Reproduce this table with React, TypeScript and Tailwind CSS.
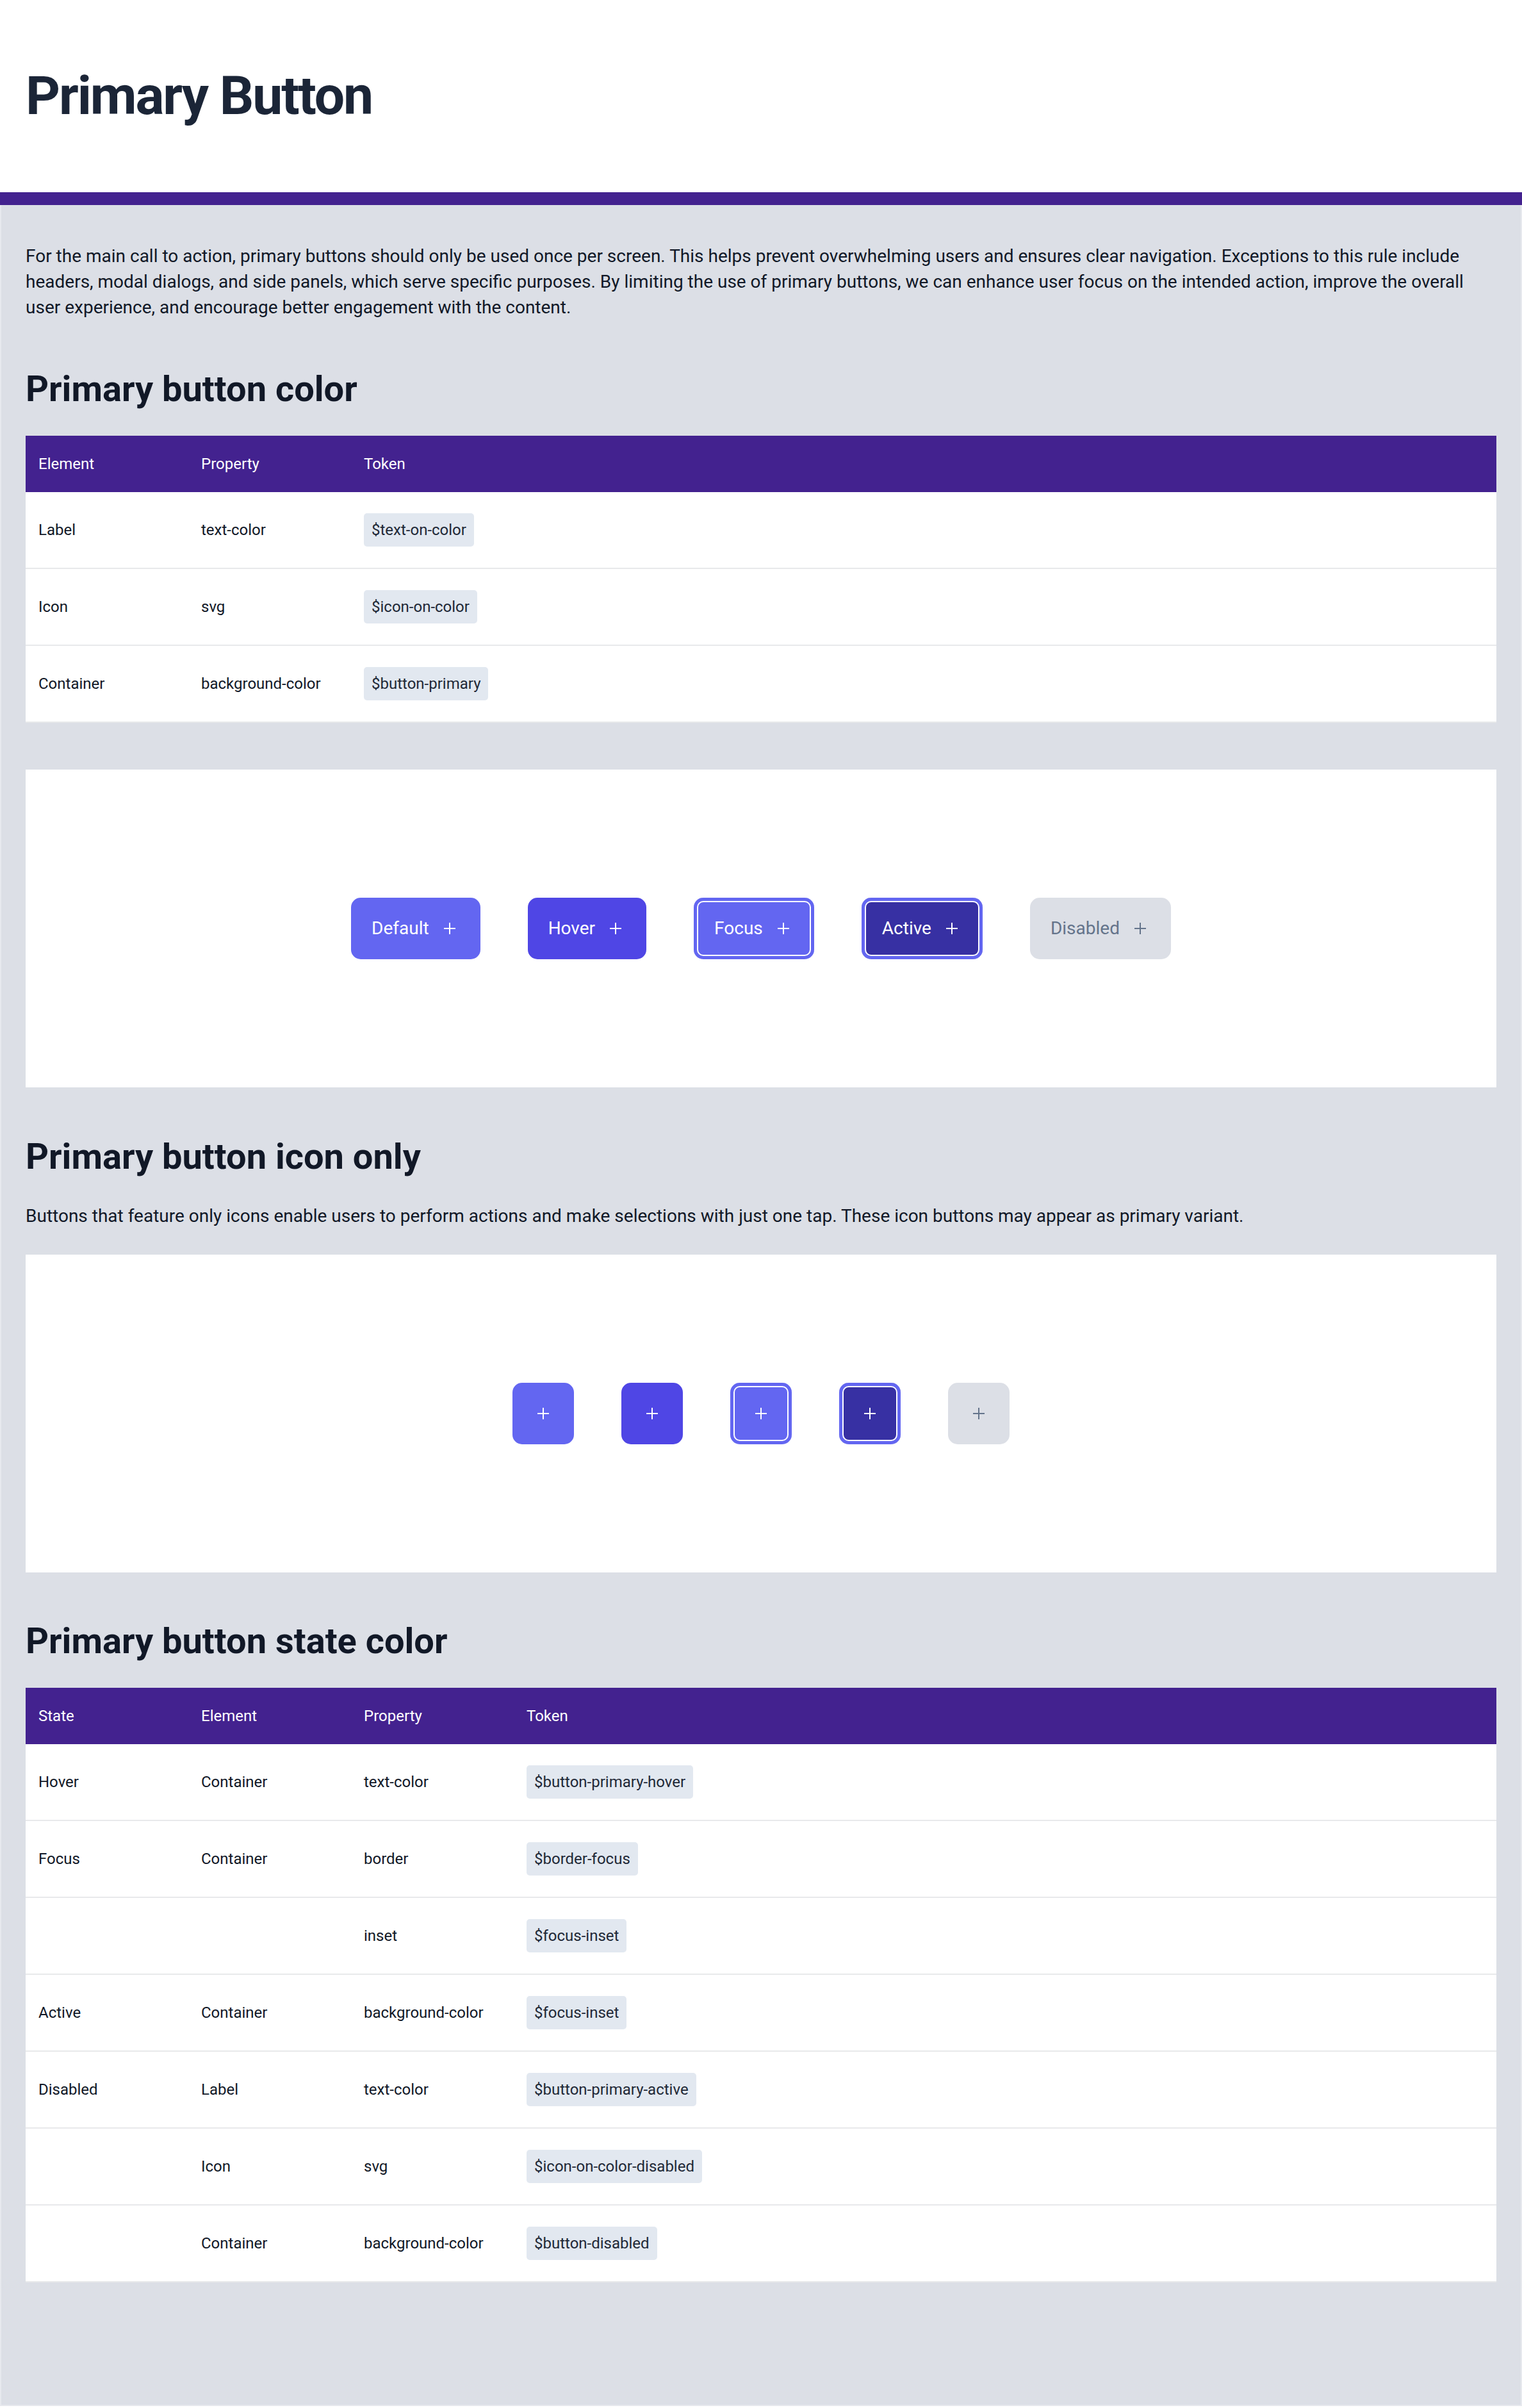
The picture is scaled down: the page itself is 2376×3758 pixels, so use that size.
import React from "react";

const PlusIcon = ({ className = "" }: { className?: string }) => (
  <svg viewBox="0 0 18 18" className={className} fill="none">
    <path d="M9 0v18M0 9h18" stroke="currentColor" strokeWidth="2" />
  </svg>
);

type Variant = "default" | "hover" | "focus" | "active" | "disabled";

const variantClass: Record<Variant, string> = {
  default: "bg-[#6366f1] text-white",
  hover: "bg-[#4f46e5] text-white",
  focus: "bg-[#6366f1] text-white shadow-[inset_0_0_0_5px_#6366f1,inset_0_0_0_7px_#ffffff]",
  active: "bg-[#3730a3] text-white shadow-[inset_0_0_0_5px_#6366f1,inset_0_0_0_7px_#ffffff]",
  disabled: "bg-[#dcdfe6] text-[#64748b]",
};

const buttons: { label: string; variant: Variant }[] = [
  { label: "Default", variant: "default" },
  { label: "Hover", variant: "hover" },
  { label: "Focus", variant: "focus" },
  { label: "Active", variant: "active" },
  { label: "Disabled", variant: "disabled" },
];

const colorRows = [
  ["Label", "text-color", "$text-on-color"],
  ["Icon", "svg", "$icon-on-color"],
  ["Container", "background-color", "$button-primary"],
];

const stateRows = [
  ["Hover", "Container", "text-color", "$button-primary-hover"],
  ["Focus", "Container", "border", "$border-focus"],
  ["", "", "inset", "$focus-inset"],
  ["Active", "Container", "background-color", "$focus-inset"],
  ["Disabled", "Label", "text-color", "$button-primary-active"],
  ["", "Icon", "svg", "$icon-on-color-disabled"],
  ["", "Container", "background-color", "$button-disabled"],
];

const Token = ({ children }: { children: React.ReactNode }) => (
  <span className="inline-flex h-[52px] items-center rounded-[5px] bg-[#e2e8f0] px-3 text-[#1f2937]">
    {children}
  </span>
);

const DataTable = ({
  head,
  rows,
  cols,
}: {
  head: string[];
  rows: string[][];
  cols: string;
}) => (
  <div className="mt-10 text-[24px]">
    <div className={`grid ${cols} h-[88px] items-center bg-[#43228f] text-white`}>
      {head.map((h) => (
        <div key={h} className="px-5">
          {h}
        </div>
      ))}
    </div>
    {rows.map((r, i) => (
      <div
        key={i}
        className={`grid ${cols} h-[120px] items-center border-b-2 border-[#e8e9eb] bg-white text-[#111827]`}
      >
        {r.map((c, j) =>
          j === r.length - 1 ? (
            <div key={j} className="px-5">
              <Token>{c}</Token>
            </div>
          ) : (
            <div key={j} className="px-5">
              {c}
            </div>
          )
        )}
      </div>
    ))}
  </div>
);

export default function App() {
  return (
    <div className="bg-white font-['Roboto','Liberation_Sans',sans-serif]">
      {/* Header */}
      <header className="flex h-[300px] items-center px-10">
        <h1 className="text-[84px] font-bold leading-none tracking-tight text-[#1b2537]">Primary Button</h1>
      </header>
      <div className="h-5 bg-[#43228f]" />

      <main className="border-x-2 border-b-2 border-[#e7e9ee] bg-[#dcdfe6] px-[38px] pt-[60px] pb-[191px]">
        <p className="text-[28px] leading-[40px] text-[#111827]">
          For the main call to action, primary buttons should only be used once per screen. This helps prevent
          overwhelming users and ensures clear navigation. Exceptions to this rule include headers, modal dialogs,
          and side panels, which serve specific purposes. By limiting the use of primary buttons, we can enhance user
          focus on the intended action, improve the overall user experience, and encourage better engagement with the
          content.
        </p>

        <h2 className="mt-[74px] text-[56px] font-bold leading-[66px] text-[#111827]">Primary button color</h2>
        <DataTable head={["Element", "Property", "Token"]} rows={colorRows} cols="grid-cols-[254px_254px_1fr]" />

        {/* Buttons with label */}
        <div className="mt-[73px] flex h-[496px] items-center justify-center gap-[74px] bg-white">
          {buttons.map((b) => (
            <button
              key={b.label}
              className={`flex h-[96px] items-center gap-4 rounded-[15px] px-8 text-[28px] ${variantClass[b.variant]}`}
            >
              <span>{b.label}</span>
              <span className="flex h-8 w-8 items-center justify-center">
                <PlusIcon className="h-[18px] w-[18px]" />
              </span>
            </button>
          ))}
        </div>

        <h2 className="mt-[75px] text-[56px] font-bold leading-[66px] text-[#111827]">Primary button icon only</h2>
        <p className="mt-10 text-[28px] leading-[40px] text-[#111827]">
          Buttons that feature only icons enable users to perform actions and make selections with just one tap. These
          icon buttons may appear as primary variant.
        </p>

        {/* Icon only buttons */}
        <div className="mt-10 flex h-[496px] items-center justify-center gap-[74px] bg-white">
          {buttons.map((b) => (
            <button
              key={b.label}
              aria-label={b.label}
              className={`flex h-[96px] w-[96px] items-center justify-center rounded-[15px] ${variantClass[b.variant]}`}
            >
              <PlusIcon className="h-[18px] w-[18px]" />
            </button>
          ))}
        </div>

        <h2 className="mt-[74px] text-[56px] font-bold leading-[66px] text-[#111827]">Primary button state color</h2>
        <DataTable
          head={["State", "Element", "Property", "Token"]}
          rows={stateRows}
          cols="grid-cols-[254px_254px_254px_1fr]"
        />
      </main>
    </div>
  );
}
